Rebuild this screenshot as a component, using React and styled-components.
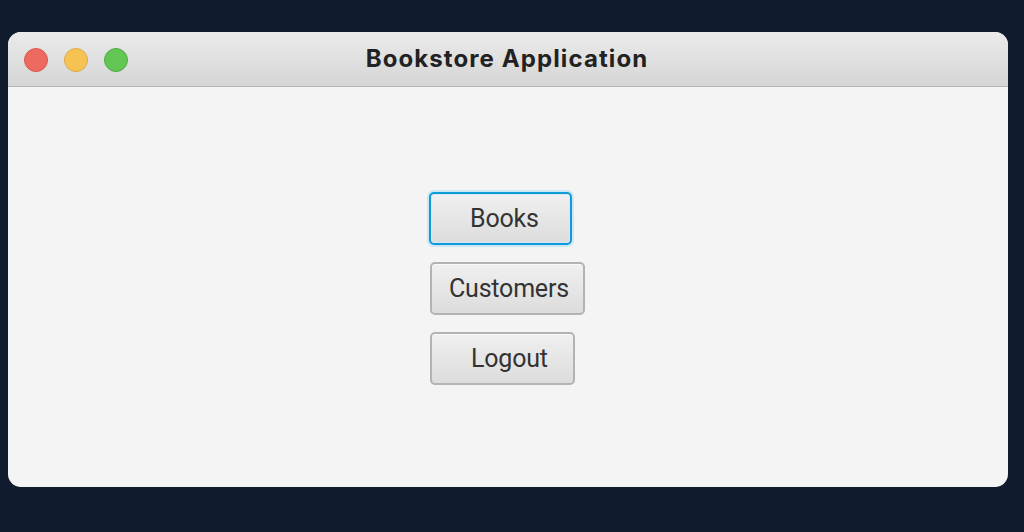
import React from "react";
import styled, { createGlobalStyle } from "styled-components";

const GlobalStyle = createGlobalStyle`
  html, body {
    margin: 0;
    padding: 0;
    background: #111b2e;
  }
  * {
    box-sizing: border-box;
  }
`;

const Desktop = styled.div`
  width: 1024px;
  height: 532px;
  padding: 32px 16px 0 8px;
  background: #111b2e;
`;

const Window = styled.div`
  width: 1000px;
  height: 455px;
  border-radius: 13px;
  overflow: hidden;
  display: flex;
  flex-direction: column;
  background: #f4f4f4;
`;

const TitleBar = styled.header`
  position: relative;
  height: 55px;
  flex-shrink: 0;
  display: flex;
  align-items: center;
  justify-content: center;
  background: linear-gradient(#ebebeb, #d5d5d5);
  border-bottom: 1px solid #b4b4b4;
`;

const Lights = styled.div`
  position: absolute;
  left: 16px;
  top: 16px;
  display: flex;
  gap: 16px;
`;

const Light = styled.span`
  width: 24px;
  height: 24px;
  border-radius: 50%;
  background: ${(p) => p.color};
  border: 1px solid ${(p) => p.edge};
`;

const Title = styled.div`
  font-family: Inter, "Liberation Sans", sans-serif;
  font-size: 24px;
  font-weight: 700;
  letter-spacing: 1.1px;
  color: #222;
  margin-top: -1px;
  margin-left: -2px;
`;

const Content = styled.main`
  flex: 1;
  display: flex;
  align-items: center;
  justify-content: center;
`;

const Column = styled.div`
  width: 156px;
  display: flex;
  flex-direction: column;
  align-items: flex-start;
  gap: 17px;
  margin-top: 3px;
`;

const Button = styled.button`
  width: ${(p) => p.w}px;
  height: 53px;
  padding: 0 0 1px ${(p) => p.pad}px;
  text-align: left;
  font-family: Roboto, "Liberation Sans", sans-serif;
  font-size: 25px;
  letter-spacing: -0.2px;
  color: #333;
  border-radius: 5px;
  border: 2px solid ${(p) => (p.focused ? "#0e9bd8" : "#b3b3b3")};
  box-shadow: ${(p) =>
    p.focused
      ? "0 0 0 2px #cde8f5, inset 0 0 0 1px #d6eaf3"
      : "inset 0 1px 0 #fafafa"};
  background: linear-gradient(#f0f0f0, #dcdcdc);
  margin-left: ${(p) => (p.focused ? -1 : 0)}px;
`;

export default function App() {
  return (
    <Desktop>
      <GlobalStyle />
      <Window>
        <TitleBar>
          <Lights>
            <Light color="#ee6a5f" edge="#d65a50" />
            <Light color="#f6c251" edge="#dea845" />
            <Light color="#62c554" edge="#52ad46" />
          </Lights>
          <Title>Bookstore Application</Title>
        </TitleBar>
        <Content>
          <Column>
            <Button focused w={143} pad={39}>
              Books
            </Button>
            <Button w={155} pad={17}>
              Customers
            </Button>
            <Button w={145} pad={39}>
              Logout
            </Button>
          </Column>
        </Content>
      </Window>
    </Desktop>
  );
}
